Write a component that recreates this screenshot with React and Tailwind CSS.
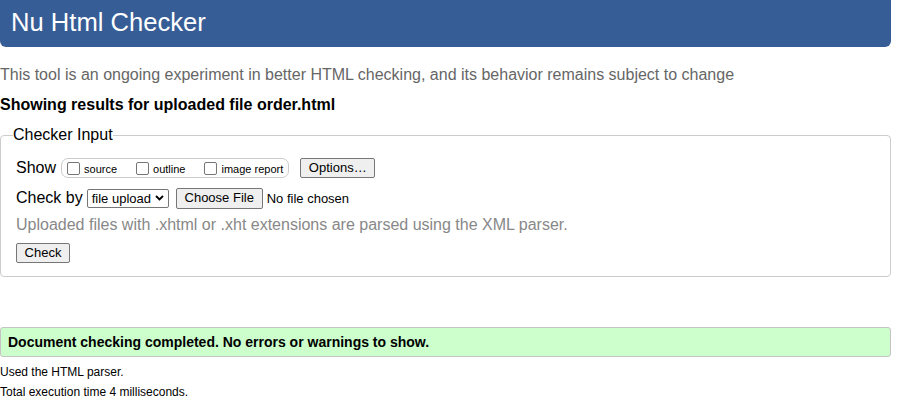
import React from "react";

function Box({ label }) {
  return (
    <label className="inline-flex items-center">
      <span className="w-[13px] h-[13px] border border-[#767676] rounded-[2px] bg-white mr-[4px]" />
      <span className="text-[11px] leading-[13px] mt-[3px]">{label}</span>
    </label>
  );
}

function Btn({ children, className = "" }) {
  return (
    <button
      type="button"
      className={
        "h-[20px] px-[7px] border border-[#767676] rounded-[2px] bg-[#efefef] text-[13px] leading-[16px] text-black " +
        className
      }
    >
      {children}
    </button>
  );
}

export default function App() {
  return (
    <div className="w-[891px] font-['Liberation_Sans',Arial,sans-serif] text-black">
      <header className="h-[47px] bg-[#365d95] rounded-b-[6px] pl-[11px] pt-[8px]">
        <h1 className="text-[25.6px] leading-[29px] text-white font-normal">Nu Html Checker</h1>
      </header>

      <p className="mt-[19px] text-[16px] leading-[18px] text-[#666]">
        This tool is an ongoing experiment in better HTML checking, and its behavior remains subject to change
      </p>
      <p className="mt-[12px] text-[16px] leading-[18px] font-bold">
        Showing results for uploaded file order.html
      </p>

      <fieldset className="mt-[12px] border border-[#ccc] rounded-[4px] px-[15px] pb-[13px]">
        <legend className="-ml-[3px] text-[16px] leading-[18px]">Checker Input</legend>

        <div className="mt-[14px] flex items-center h-[20px]">
          <span className="text-[16px] leading-[18px]">Show</span>
          <div className="ml-[5px] h-[20px] flex items-center gap-[19px] border border-[#ccc] rounded-[7px] pl-[5px] pr-[5px]">
            <Box label="source" />
            <Box label="outline" />
            <Box label="image report" />
          </div>
          <Btn className="ml-[11px] w-[75px]">Options…</Btn>
        </div>

        <div className="mt-[10px] flex items-center h-[20px]">
          <span className="text-[16px] leading-[18px]">Check by</span>
          <div className="ml-[4px] w-[82px] h-[19px] border border-[#767676] rounded-[2px] bg-white flex items-center justify-between pl-[4px] pr-[4px] text-[13px] leading-[15px]">
            <span>file upload</span>
            <svg width="9" height="6" viewBox="0 0 9 6" fill="none">
              <path d="M1 1L4.5 4.5L8 1" stroke="#000" strokeWidth="1.8" />
            </svg>
          </div>
          <Btn className="ml-[7px] w-[87px] h-[21px]">Choose File</Btn>
          <span className="ml-[4px] text-[13px] leading-[15px]">No file chosen</span>
        </div>

        <p className="mt-[8px] text-[16px] leading-[18px] text-[#888]">
          Uploaded files with .xhtml or .xht extensions are parsed using the XML parser.
        </p>

        <div className="mt-[9px] flex">
          <Btn className="w-[54px]">Check</Btn>
        </div>
      </fieldset>

      <div className="mt-[50px] h-[30px] border border-[#c4c4c4] rounded-[3px] bg-[#ccffcc] flex items-center pl-[7px]">
        <span className="text-[14px] leading-[16px] font-bold">
          Document checking completed. No errors or warnings to show.
        </span>
      </div>

      <p className="mt-[8px] text-[12px] leading-[14px]">Used the HTML parser.</p>
      <p className="mt-[6px] text-[12px] leading-[14px]">Total execution time 4 milliseconds.</p>
    </div>
  );
}
